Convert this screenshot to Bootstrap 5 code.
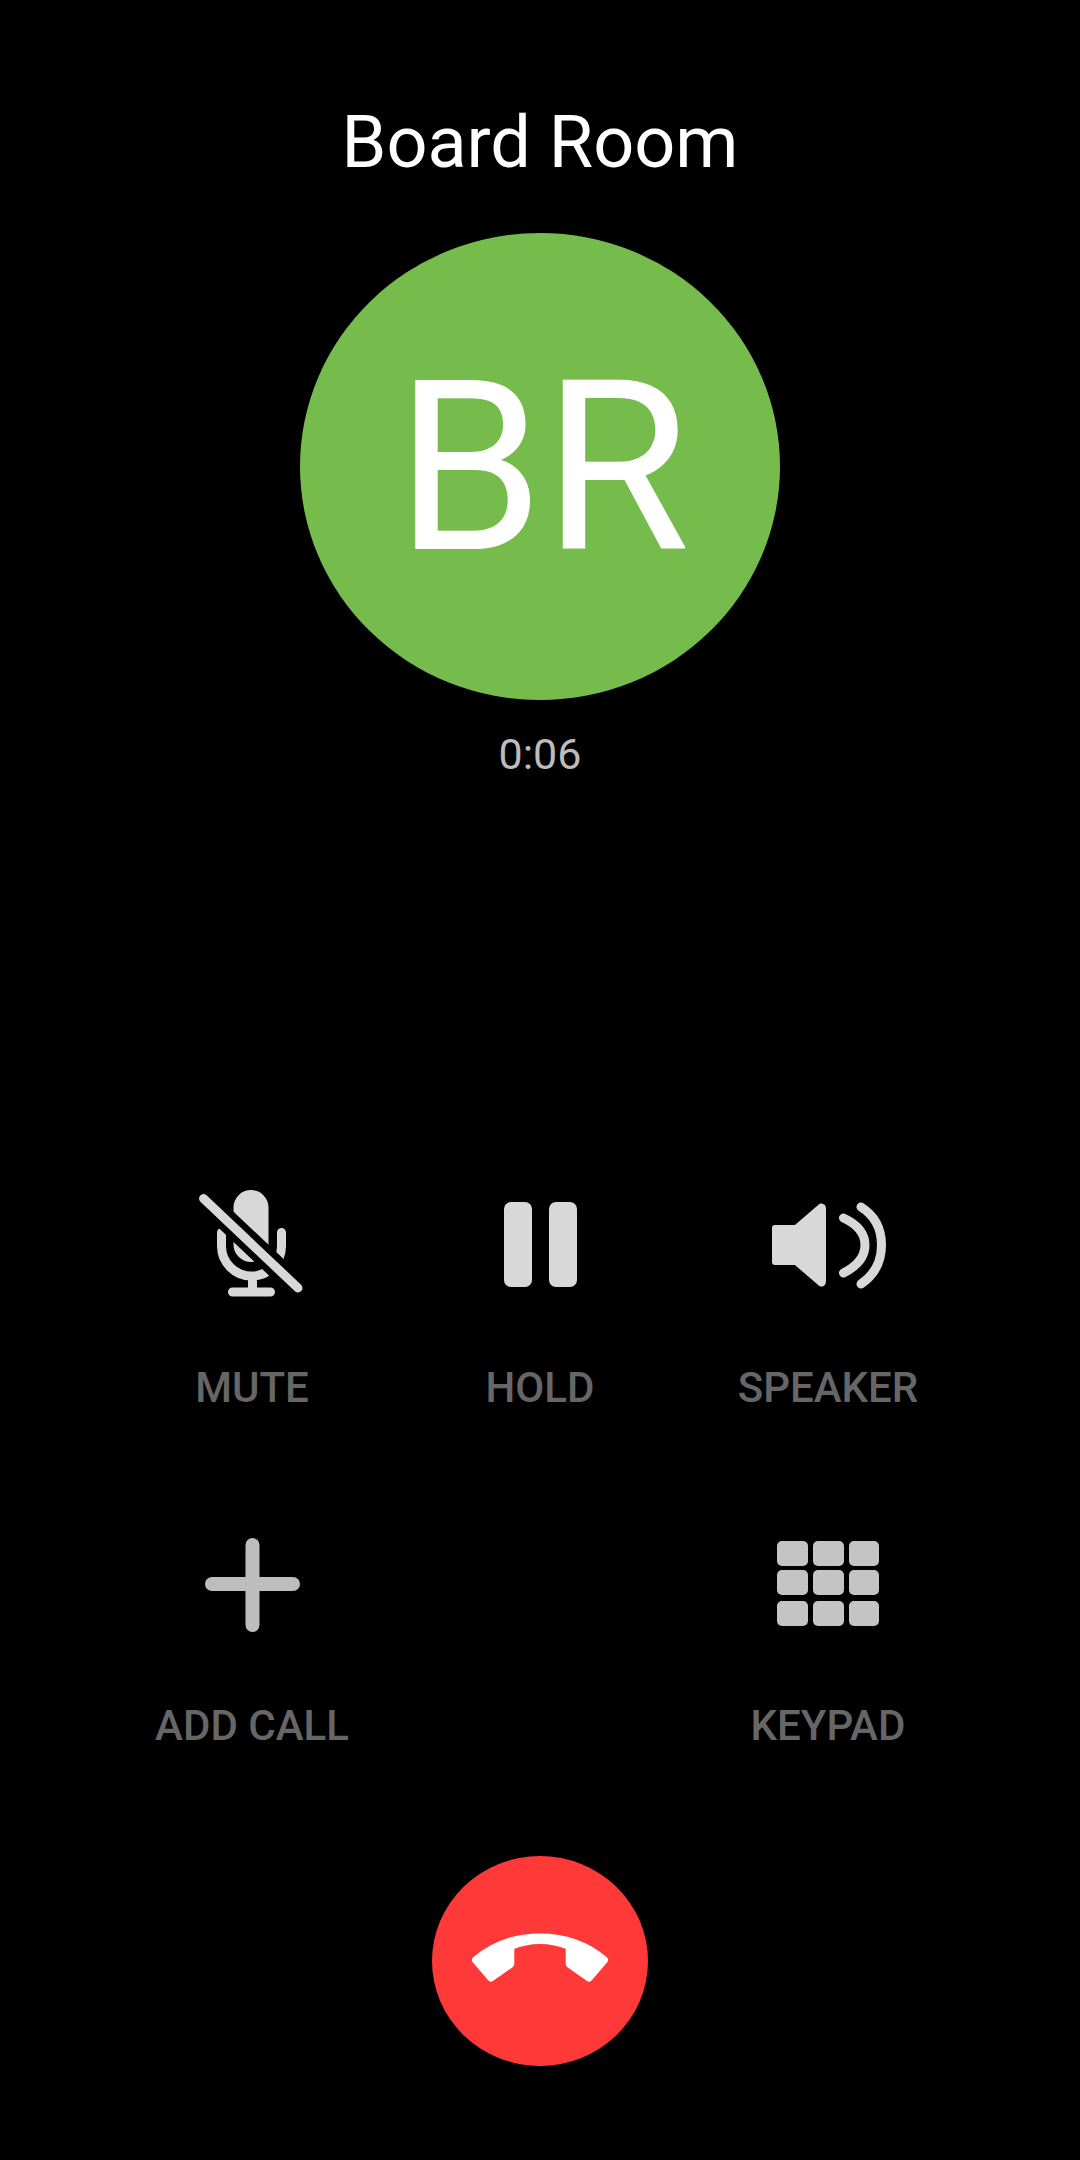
<!DOCTYPE html>
<html lang="en">
<head>
<meta charset="utf-8">
<title>Board Room</title>
<link rel="stylesheet" href="https://cdn.jsdelivr.net/npm/bootstrap@5.3.0/dist/css/bootstrap.min.css">
<style>
  html, body { background: #000; }
  body { width: 1080px; height: 2160px; font-family: Roboto, "Liberation Sans", sans-serif; overflow: hidden; }
  .caller-name { font-size: 72px; line-height: 80px; color: #fff; padding-top: 103px; font-weight: 400; margin: 0; }
  .avatar-disc { width: 480px; height: 467px; margin-top: 50px; background: #76bc4c; color: #fff; font-size: 237px; line-height: 1; padding: 4px 0 0 5px; }
  .call-timer { font-size: 43px; line-height: 48px; color: #bcbcbc; margin-top: 30px; }
  .action-grid { width: 864px; margin-top: 402px; }
  .action-cell { height: 338px; }
  .action-icon { display: block; width: 120px; height: 120px; margin: 0 auto; }
  .action-label { font-size: 42px; line-height: 48px; font-weight: 500; color: #666; margin-top: 64px; }
  .end-call { width: 216px; height: 210px; background: #ff3838; margin-top: 0; }
  .end-call svg { display: block; width: 216px; height: 210px; }
</style>
</head>
<body>
<main class="d-flex flex-column align-items-center text-center">
  <h1 class="caller-name">Board Room</h1>
  <div class="avatar-disc rounded-circle d-flex align-items-center justify-content-center">BR</div>
  <div class="call-timer">0:06</div>

  <div class="action-grid row g-0">
    <div class="col-4 action-cell">
      <svg class="action-icon" viewBox="0 0 120 120" aria-hidden="true">
        <rect x="41.500" y="10" width="35" height="72" rx="17.500" fill="#d8d8d8"/>
        <path d="M29.500 52.500V66a30 30 0 0 0 60 0V52.500M60.500 96v16M40.500 112h38" fill="none" stroke="#d8d8d8" stroke-width="9" stroke-linecap="round"/>
        <path d="M0 7.600L120 121" stroke="#000" stroke-width="22"/>
        <path d="M11.500 18.500L106 108" stroke="#d8d8d8" stroke-width="9" stroke-linecap="round"/>
      </svg>
      <div class="action-label">MUTE</div>
    </div>
    <div class="col-4 action-cell">
      <svg class="action-icon" viewBox="0 0 120 120" aria-hidden="true">
        <rect x="24" y="22" width="28" height="85" rx="7" fill="#d8d8d8"/>
        <rect x="69" y="22" width="28" height="85" rx="7" fill="#d8d8d8"/>
      </svg>
      <div class="action-label">HOLD</div>
    </div>
    <div class="col-4 action-cell">
      <svg class="action-icon" viewBox="0 0 120 120" aria-hidden="true">
        <path d="M7 48H28L53 26.500Q55 26 55 29V101Q55 104 53 103.500L28 82H7Z" fill="#d8d8d8" stroke="#d8d8d8" stroke-width="6" stroke-linejoin="round"/>
        <path d="M75.500 38Q97 48 97 65T75.500 93" fill="none" stroke="#d8d8d8" stroke-width="9" stroke-linecap="round"/>
        <path d="M93 27Q113.500 40 113.500 65T93 104" fill="none" stroke="#d8d8d8" stroke-width="9" stroke-linecap="round"/>
      </svg>
      <div class="action-label">SPEAKER</div>
    </div>

    <div class="col-4 action-cell">
      <svg class="action-icon" viewBox="0 0 120 120" aria-hidden="true">
        <path d="M60.500 27V107M20 66H101" fill="none" stroke="#bdbdbd" stroke-width="14" stroke-linecap="round"/>
      </svg>
      <div class="action-label">ADD CALL</div>
    </div>
    <div class="col-4 action-cell"></div>
    <div class="col-4 action-cell">
      <svg class="action-icon" viewBox="0 0 120 120" aria-hidden="true" fill="#c4c4c4">
        <rect x="9" y="23" width="31" height="25" rx="5"/><rect x="45" y="23" width="31" height="25" rx="5"/><rect x="81" y="23" width="30" height="25" rx="5"/>
        <rect x="9" y="52" width="31" height="25" rx="5"/><rect x="45" y="52" width="31" height="25" rx="5"/><rect x="81" y="52" width="30" height="25" rx="5"/>
        <rect x="9" y="83" width="31" height="25" rx="5"/><rect x="45" y="83" width="31" height="25" rx="5"/><rect x="81" y="83" width="30" height="25" rx="5"/>
      </svg>
      <div class="action-label">KEYPAD</div>
    </div>
  </div>

  <button type="button" class="end-call btn rounded-circle border-0 p-0" aria-label="End call">
    <svg viewBox="0 0 216 210" aria-hidden="true">
      <path d="M44 104C62 89 84 81.500 108 81.500S154 89 172 104L157 121.500L137.700 108V90Q123 84 108 84T78.300 90V108L59 121.500Z" fill="#fff" stroke="#fff" stroke-width="8" stroke-linejoin="round"/>
    </svg>
  </button>
</main>
</body>
</html>
